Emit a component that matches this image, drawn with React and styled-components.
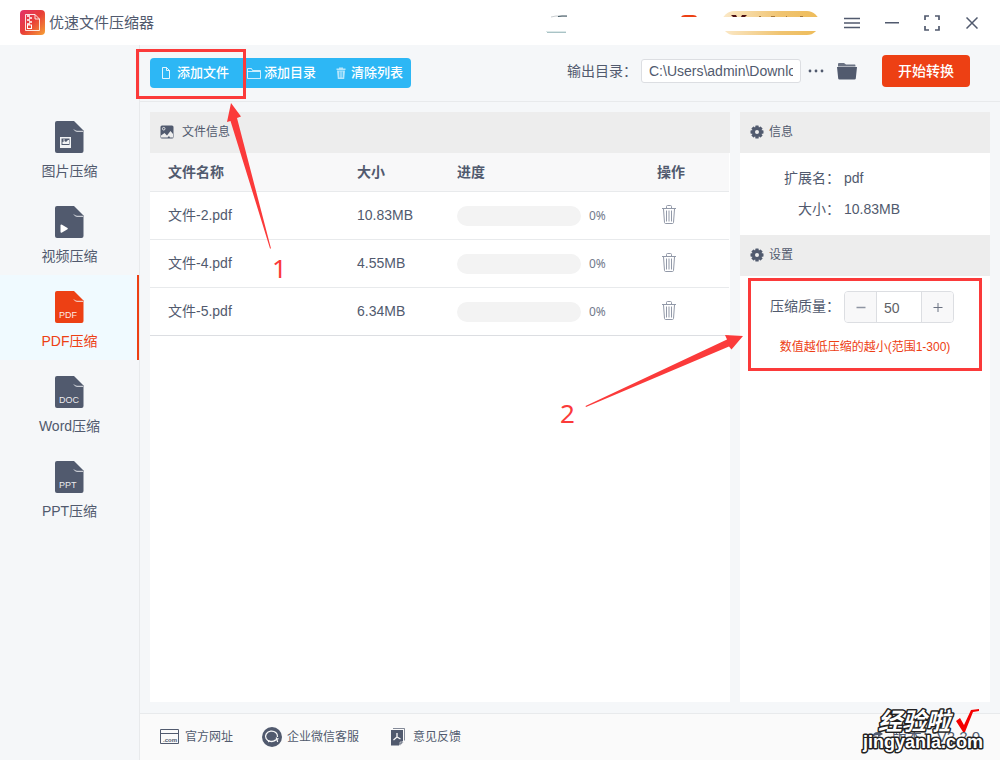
import React, { useState } from 'react';
import styled, { createGlobalStyle } from 'styled-components';

const ink = '#515a6e';
const accent = '#ed4014';
const mark = '#fb3a3a';

const GlobalStyle = createGlobalStyle`
  * { box-sizing: border-box; }
  body {
    margin: 0;
    color: ${ink};
    background: #f5f7f9;
    font: 14px/20px "Liberation Sans", "Noto Sans CJK SC", sans-serif;
  }
  button, input { font: inherit; color: inherit; }
  button { cursor: pointer; }
  svg { display: block; flex: none; }
`;

const Page = styled.div`
  min-height: 100vh;
  display: flex;
  flex-direction: column;
`;

const TitleBar = styled.header`
  display: flex;
  align-items: center;
  height: 45px;
  padding: 0 20px;
  background: #fff;
`;

const AppTitle = styled.h1`
  margin: 0 auto 0 4px;
  font-size: 15px;
  font-weight: 400;
`;

const WindowControls = styled.div`
  display: flex;
  gap: 20px;
  margin-left: 22px;
  margin-right: -2px;
`;

const IconButton = styled.button`
  display: flex;
  align-items: center;
  justify-content: center;
  width: ${(p) => p.$width || 20}px;
  height: 20px;
  padding: 0;
  border: 0;
  background: none;
`;

const Body = styled.div`
  flex: 1;
  display: flex;
`;

const Sidebar = styled.nav`
  flex: none;
  width: 140px;
  padding-top: 60px;
  border-right: 1px solid #e8eaec;
`;

const NavItem = styled.a`
  display: flex;
  flex-direction: column;
  align-items: center;
  gap: 8px;
  height: 85px;
  padding-top: 16px;
  text-decoration: none;
  color: ${(p) => (p.$active ? accent : ink)};
  background: ${(p) => (p.$active ? '#f0faff' : 'none')};
  box-shadow: ${(p) => (p.$active ? `inset -2px 0 ${accent}` : 'none')};
`;

const Main = styled.main`
  flex: 1;
  min-width: 0;
  display: flex;
  flex-direction: column;
`;

const Toolbar = styled.div`
  display: flex;
  align-items: center;
  justify-content: space-between;
  height: 57px;
  padding: 0 30px 0 10px;
  border-bottom: 1px solid #e8eaec;
`;

const ButtonGroup = styled.div`
  position: relative;
  display: flex;
  border-radius: 4px;
  background: #2db7f5;
`;

const ToolButton = styled.button`
  display: flex;
  align-items: center;
  gap: 3px;
  height: 30px;
  padding: 0 8px 0 10px;
  border: 0;
  background: none;
  color: #fff;
  font-size: 13px;
  font-weight: 500;
`;

const OutputForm = styled.form`
  display: flex;
  align-items: center;
  padding-bottom: 4px;
`;

const PathInput = styled.input`
  width: 160px;
  height: 24px;
  margin: 0 5px 0 4px;
  padding: 0 7px;
  border: 1px solid #dcdee2;
  border-radius: 3px;
  background: #fff;
`;

const PathActions = styled.div`
  display: flex;
  gap: 11px;
`;

const StartButton = styled.button`
  width: 88px;
  height: 32px;
  margin-left: 25px;
  padding: 0;
  border: 0;
  border-radius: 4px;
  background: ${accent};
  color: #fff;
  font-weight: 500;
`;

const Panels = styled.div`
  flex: 1;
  display: flex;
  gap: 10px;
  padding: 10px 10px 11px;
`;

const FilePanel = styled.section`
  flex: 1;
  min-width: 0;
  background: #fff;
`;

const SidePanel = styled.aside`
  position: relative;
  flex: none;
  width: 250px;
  background: #fff;
`;

const PanelHead = styled.h2`
  display: flex;
  align-items: center;
  gap: ${(p) => p.$gap || 5}px;
  height: 41px;
  margin: 0;
  padding: 0 10px 2px;
  background: #ededed;
  font-size: 12px;
  font-weight: 400;
`;

const FileTable = styled.table`
  width: 100%;
  table-layout: fixed;
  border-collapse: separate;
  border-spacing: 0;
  border-right: 1px solid #fff;
`;

const HeadCell = styled.th`
  width: ${(p) => (p.$width ? `${p.$width}px` : 'auto')};
  height: 39px;
  padding: 0 18px;
  border-bottom: 1px solid #e8eaec;
  background: #f8f8f9;
  text-align: left;
  font-weight: 700;
`;

const Cell = styled.td`
  height: 48px;
  padding: 0 0 ${(p) => (p.$bar ? 0 : 2)}px 18px;
  border-bottom: 1px solid #e8eaec;
  tr:last-child > & { border-color: #dcdee2; }
`;

const Progress = styled.div`
  display: flex;
  align-items: center;
  gap: 8px;
  color: #737a8b;
  font: 12px/20px "Noto Sans", sans-serif;
`;

const Track = styled.div`
  width: 124px;
  height: 20px;
  border-radius: 10px;
  background: #f3f3f3;
`;

const InfoList = styled.dl`
  display: grid;
  grid-template-columns: 100px 1fr;
  column-gap: 4px;
  margin: 0;
  padding: 10px 0;
  line-height: 31px;
`;

const Term = styled.dt`
  text-align: right;
`;

const Value = styled.dd`
  margin: 0;
`;

const QualityRow = styled.div`
  display: grid;
  grid-template-columns: 100px 110px;
  align-items: center;
  column-gap: 4px;
  padding-top: 15px;
`;

const QualityLabel = styled.label`
  padding-bottom: 2px;
  text-align: right;
`;

const Stepper = styled.div`
  display: flex;
  height: 32px;
  border: 1px solid #dcdee2;
  border-radius: 4px;
  overflow: hidden;
`;

const StepButton = styled.button`
  display: flex;
  align-items: center;
  justify-content: center;
  width: 31px;
  padding: 0;
  border: 0;
  background: #f8f8f9;
`;

const StepInput = styled.input`
  flex: 1;
  min-width: 0;
  padding: 2px 7px 0;
  border: solid #dcdee2;
  border-width: 0 1px;
  background: #fff;
  color: #606266;
`;

const Hint = styled.p`
  margin: 14px 0 0;
  text-align: center;
  font-size: 12px;
  color: ${accent};
`;

const Footer = styled.footer`
  display: flex;
  align-items: center;
  gap: 29px;
  height: 47px;
  padding: 0 20px;
  border-top: 1px solid #e8eaec;
  background: #fafafa;
  font-size: 12px;
`;

const FooterLink = styled.a`
  display: flex;
  align-items: center;
  gap: 5px;
  color: inherit;
  text-decoration: none;
`;

const Version = styled.span`
  position: relative;
  display: flex;
  align-items: center;
  gap: 8px;
  margin-left: auto;
  font-size: 15px;
`;

const Outline = styled.div`
  position: absolute;
  z-index: 2;
  top: ${(p) => p.$top}px;
  left: ${(p) => p.$left}px;
  width: ${(p) => p.$width}px;
  height: ${(p) => p.$height}px;
  border: 3px solid ${mark};
  pointer-events: none;
`;

const Pointer = styled.svg`
  position: absolute;
  z-index: 2;
  top: ${(p) => p.$top}px;
  left: ${(p) => p.$left}px;
  fill: ${mark};
  font: 26px "Noto Sans", sans-serif;
  pointer-events: none;
`;

const Watermark = styled.svg`
  position: absolute;
  right: -9px;
  bottom: -9px;
  pointer-events: none;
  font-family: "Liberation Sans", "Noto Sans CJK SC", sans-serif;
  font-weight: 700;
`;

const Logo = () => (
  <svg width="25" height="25" viewBox="0 0 25 25">
    <defs>
      <linearGradient id="logo" x1="0" y1="0" x2="1" y2="1">
        <stop offset="0" stopColor="#e2306b" />
        <stop offset=".5" stopColor="#e83f37" />
        <stop offset="1" stopColor="#f6a135" />
      </linearGradient>
    </defs>
    <rect width="25" height="25" rx="4" fill="url(#logo)" />
    <path d="M5.500 4.500H15L19.500 9V20.500H5.500ZM15 4.500V9H19.500" fill="none" stroke="#fff" strokeOpacity=".85" />
    <path d="M7 6h3M9 8h3M7 10h3M9 12h3M7 14h3" stroke="#fff" strokeWidth="1.400" />
    <rect x="7.500" y="15" width="4" height="3.500" fill="none" stroke="#fff" />
  </svg>
);

const AccountStrip = () => (
  <svg width="275" height="45" viewBox="545 0 275 45" aria-hidden="true">
    <defs>
      <linearGradient id="gold">
        <stop offset="0" stopColor="#fbe9c9" />
        <stop offset=".6" stopColor="#f0c471" />
        <stop offset="1" stopColor="#eebc5a" />
      </linearGradient>
    </defs>
    <path d="M551 17l5-1 11 .500" fill="none" stroke="#c8cdd0" />
    <path d="M558 16.500l4-.5h5" fill="none" stroke="#3f5560" strokeWidth="1.200" />
    <path d="M546 31.500h20" stroke="#dce8e8" />
    <path d="M547 32.500h19" stroke="#a9c3c6" />
    <path d="M681 17q1-2 4-2h8q3 0 4 2z" fill={accent} />
    <rect x="722" y="11" width="97" height="24" rx="12" fill="url(#gold)" />
    <path d="M731 15h5l1 2h-4zM742 15h5l-2 2h-4z" fill="#4a0e12" />
    <path d="M759 16.500h2M771 16.500h4M786 16.500h1M800 16.500h3" stroke="#a97a3a" />
    <rect x="718" y="17" width="102" height="14" fill="#fff" />
  </svg>
);

const FileShape = ({ kind }) => (
  <svg width="29" height="32" viewBox="0 0 29 32">
    <path d="M2 0H19L28.500 9.500V30q0 2-2 2H2q-2 0-2-2V2Q0 0 2 0Z" fill="currentColor" />
    <path d="M19 8.500q1 1.800 3 1.800h6" fill="none" stroke="#f5f7f9" strokeWidth=".9" />
    {kind === 'image' && (
      <>
        <rect x="5" y="16" width="11" height="11" fill="#f1f2f4" />
        <rect x="6.500" y="17.500" width="8" height="6.500" fill={ink} />
        <path d="M7.500 23v-2l2-1 1.500 1 2-2h1v4z" fill="#f1f2f4" />
        <circle cx="9" cy="19" r=".8" fill="#f1f2f4" />
      </>
    )}
    {kind === 'video' && <path d="M5.500 19.500q0-1.500 1.500-.8l5.500 3.300q.8.600 0 1.200L7 26.500q-1.500.7-1.500-.8z" fill="#fff" />}
    {kind.length === 3 && (
      <text x="4" y="27" fill="#fff" fillOpacity=".9" fontSize="9" fontFamily="Liberation Sans, sans-serif">{kind}</text>
    )}
  </svg>
);

const PageIcon = () => (
  <svg width="14" height="14" viewBox="0 0 14 14" fill="none" stroke="#fff" strokeOpacity=".85">
    <path d="M2.500 1.500H6.500L9.500 4.500V12.500H2.500ZM6.500 1.500V4.500H9.500" />
  </svg>
);

const FolderLineIcon = () => (
  <svg width="14" height="14" viewBox="0 0 14 14" fill="none" stroke="#fff" strokeOpacity=".75">
    <path d="M.5 12.500V2.500H4.500L5.500 4.500H13.500V12.500ZM.5 5.500H13" />
  </svg>
);

const BinIcon = () => (
  <svg width="14" height="14" viewBox="0 0 14 14" fill="#fff" fillOpacity=".65">
    <path d="M5 2.500V1.500H9V2.500H11.500V4H2.500V2.500ZM3 4.500H11L10.200 13H3.800Z" />
    <path d="M5.500 5.500v6M7 5.500v6M8.500 5.500v6" stroke="#2db7f5" strokeWidth=".6" />
  </svg>
);

const TrashIcon = () => (
  <svg width="14" height="20" viewBox="0 0 14 20" fill="none" stroke="#9299a8">
    <path d="M0 3.500H14M4.500 3V1.500Q4.500.5 5.500.5H8.500Q9.500.5 9.500 1.500V3" />
    <path d="M1.500 4L2.500 17.500Q2.700 18.500 3.500 18.500H10.500Q11.300 18.500 11.500 17.500L12.500 4" />
    <path d="M4.500 5.500V16.500M7 5.500V16.500M9.500 5.500V16.500" />
  </svg>
);

const PictureIcon = () => (
  <svg width="14" height="14" viewBox="0 0 14 14">
    <rect x=".5" y=".5" width="13" height="13" rx="1.500" fill={ink} />
    <circle cx="3.700" cy="3.700" r="1.300" fill="none" stroke="#ededed" strokeWidth=".9" />
    <path d="M1 12.500V10.500L4.500 8 7 10.500 10.500 6 13 9V12.500H10L9 11 7.500 12.500Z" fill="#ededed" />
  </svg>
);

const GearIcon = () => (
  <svg width="14" height="14" viewBox="-7 -7 14 14" fill={ink}>
    {[0, 45, 90, 135].map((a) => (
      <rect key={a} x="-1.700" y="-6.500" width="3.400" height="13" rx=".6" transform={`rotate(${a})`} />
    ))}
    <circle r="5" />
    <circle r="2" fill="#ededed" />
  </svg>
);

const FolderIcon = () => (
  <svg width="20" height="18" viewBox="0 0 20 18" fill={ink}>
    <path d="M1 4.500V2Q1 1 2 1H7L9 2.500H18Q18.500 2.500 18.500 4.500Z" opacity=".85" />
    <path d="M0 5H20L18.800 16.500Q18.700 17.500 17.500 17.500H2.500Q1.300 17.500 1.200 16.500Z" />
  </svg>
);

const SiteIcon = () => (
  <svg width="20" height="16" viewBox="0 0 20 16">
    <path d="M.5 .5H18.500V14.500H.5ZM.5 4.500H18.500" fill="none" stroke={ink} />
    <text x="3" y="12.500" fontSize="6" fontWeight="700" fill={ink}>.com</text>
  </svg>
);

const ChatIcon = () => (
  <svg width="20" height="20" viewBox="0 0 20 20">
    <circle cx="10" cy="10" r="10" fill={ink} />
    <path d="M13.500 13.200A6 5.200 0 1 1 15.500 10" fill="none" stroke="#fafafa" strokeWidth="1.300" />
    <path d="M6 13v2.500l2.500-1.500" fill="#fafafa" />
    <path d="M12 13.800l4.500-2.300M14.200 10.500l1.500 4.500" stroke="#fafafa" strokeWidth="1.200" />
  </svg>
);

const FeedbackIcon = () => (
  <svg width="20" height="18" viewBox="0 0 20 18">
    <path d="M5 .5H16.500V12.500" fill="none" stroke={ink} strokeOpacity=".7" />
    <path d="M3 2H15V13L11 17.500H3Z" fill={ink} />
    <path d="M12 17.500V14H15.500Z" fill={ink} stroke="#fafafa" strokeWidth=".6" />
    <path d="M9 5V9L5.500 12M9 9L12.500 11" fill="none" stroke="#fafafa" strokeWidth="1.300" />
  </svg>
);

const nav = [
  ['image', '图片压缩'],
  ['video', '视频压缩'],
  ['PDF', 'PDF压缩'],
  ['DOC', 'Word压缩'],
  ['PPT', 'PPT压缩'],
];

const files = [
  ['文件-2.pdf', '10.83MB'],
  ['文件-4.pdf', '4.55MB'],
  ['文件-5.pdf', '6.34MB'],
];

export default function App() {
  const [active, setActive] = useState('PDF');
  const [quality, setQuality] = useState(50);
  const [path, setPath] = useState('C:\\Users\\admin\\Downloads');
  const step = (d) => setQuality((q) => Math.min(300, Math.max(1, Number(q) + d)));

  return (
    <Page>
      <GlobalStyle />
      <TitleBar>
        <Logo />
        <AppTitle>优速文件压缩器</AppTitle>
        <AccountStrip />
        <WindowControls>
          <IconButton aria-label="菜单">
            <svg width="16" height="12" viewBox="0 0 16 12" stroke={ink} strokeWidth="1.500"><path d="M0 1.500H16M0 6H16M0 10.500H16" /></svg>
          </IconButton>
          <IconButton aria-label="最小化">
            <svg width="14" height="2" viewBox="0 0 14 2"><rect width="14" height="1.500" fill={ink} /></svg>
          </IconButton>
          <IconButton aria-label="最大化">
            <svg width="16" height="16" viewBox="0 0 16 16" fill="none" stroke={ink} strokeWidth="1.700"><path d="M1 5V1H5M11 1H15V5M15 11V15H11M5 15H1V11" /></svg>
          </IconButton>
          <IconButton aria-label="关闭">
            <svg width="12" height="12" viewBox="0 0 12 12" stroke={ink} strokeWidth="1.500"><path d="M.5 .5L11.500 11.500M11.500 .5L.5 11.500" /></svg>
          </IconButton>
        </WindowControls>
      </TitleBar>
      <Body>
        <Sidebar>
          {nav.map(([kind, label]) => (
            <NavItem key={kind} href="#" $active={active === kind} onClick={() => setActive(kind)}>
              <FileShape kind={kind} />
              {label}
            </NavItem>
          ))}
        </Sidebar>
        <Main>
          <Toolbar>
            <ButtonGroup>
              <ToolButton><PageIcon />添加文件</ToolButton>
              <ToolButton><FolderLineIcon />添加目录</ToolButton>
              <ToolButton><BinIcon />清除列表</ToolButton>
              <Outline $top={-9} $left={-14} $width={110} $height={50} />
              <Pointer $top={40} $left={70} width="80" height="190" viewBox="220 98 80 190">
                <path d="M231 103L241 116.500 237 118 271 248.500 270 248.500 230.500 121 227 122Z" />
                <text x="272" y="278">1</text>
              </Pointer>
            </ButtonGroup>
            <OutputForm onSubmit={(e) => e.preventDefault()}>
              <label htmlFor="output">输出目录：</label>
              <PathInput id="output" value={path} onChange={(e) => setPath(e.target.value)} />
              <PathActions>
                <IconButton type="button" aria-label="选择目录">
                  <svg width="16" height="4" viewBox="0 0 16 4" fill={ink}><circle cx="2" cy="2" r="1.400" /><circle cx="8" cy="2" r="1.400" /><circle cx="14" cy="2" r="1.400" /></svg>
                </IconButton>
                <IconButton type="button" aria-label="打开目录"><FolderIcon /></IconButton>
              </PathActions>
              <StartButton type="submit">开始转换</StartButton>
            </OutputForm>
          </Toolbar>
          <Panels>
            <FilePanel>
              <PanelHead $gap={8}><PictureIcon />文件信息</PanelHead>
              <FileTable>
                <thead>
                  <tr>
                    <HeadCell>文件名称</HeadCell>
                    <HeadCell $width={100}>大小</HeadCell>
                    <HeadCell $width={200}>进度</HeadCell>
                    <HeadCell $width={90}>操作</HeadCell>
                  </tr>
                </thead>
                <tbody>
                  {files.map(([name, size]) => (
                    <tr key={name}>
                      <Cell>{name}</Cell>
                      <Cell>{size}</Cell>
                      <Cell $bar><Progress><Track />0%</Progress></Cell>
                      <Cell><IconButton aria-label="删除" $width={24}><TrashIcon /></IconButton></Cell>
                    </tr>
                  ))}
                </tbody>
              </FileTable>
            </FilePanel>
            <SidePanel>
              <PanelHead><GearIcon />信息</PanelHead>
              <InfoList>
                <Term>扩展名：</Term><Value>pdf</Value>
                <Term>大小：</Term><Value>10.83MB</Value>
              </InfoList>
              <PanelHead><GearIcon />设置</PanelHead>
              <QualityRow>
                <QualityLabel htmlFor="quality">压缩质量：</QualityLabel>
                <Stepper>
                  <StepButton aria-label="减少" onClick={() => step(-1)}>
                    <svg width="10" height="10" viewBox="0 0 10 10" stroke="#8e95a3"><path d="M0.500 5.500H9.500" strokeWidth="1.500" /></svg>
                  </StepButton>
                  <StepInput id="quality" value={quality} onChange={(e) => setQuality(e.target.value)} />
                  <StepButton aria-label="增加" onClick={() => step(1)}>
                    <svg width="10" height="10" viewBox="0 0 10 10" stroke="#6b7282"><path d="M.5 5.500H9.500M5 1V10" /></svg>
                  </StepButton>
                </Stepper>
              </QualityRow>
              <Hint>数值越低压缩的越小(范围1-300)</Hint>
              <Outline $top={166} $left={8} $width={234} $height={93} />
              <Pointer $top={218} $left={-190} width="200" height="110" viewBox="550 330 200 110">
                <path d="M743 336L731.500 349.500 729 346.500 586 407 585.500 406 727 339.500 725 335Z" />
                <text x="560" y="423">2</text>
              </Pointer>
            </SidePanel>
          </Panels>
          <Footer>
            <FooterLink href="#"><SiteIcon />官方网址</FooterLink>
            <FooterLink href="#"><ChatIcon />企业微信客服</FooterLink>
            <FooterLink href="#"><FeedbackIcon />意见反馈</FooterLink>
            <Version>
              <svg width="12" height="14" viewBox="0 0 12 14" fill={ink}><path d="M0 7Q1 2 6 2V0L11 4 6 7V5Q3 5 0 7Z" /></svg>
              版本：V2.2.0
              <Watermark width="130" height="52" viewBox="858 704 130 52">
                <g fill="#fff" stroke="#222" strokeWidth="3" strokeLinejoin="round" paintOrder="stroke">
                  <text x="877" y="730" fontSize="24" fontStyle="italic">经验啦</text>
                  <text x="862" y="748" fontSize="18">jingyanla.com</text>
                </g>
                <path d="M955 721L959 718 963 725 970 710 978 709V711L972 712 964 732H962Z" fill="#f40000" />
              </Watermark>
            </Version>
          </Footer>
        </Main>
      </Body>
    </Page>
  );
}
